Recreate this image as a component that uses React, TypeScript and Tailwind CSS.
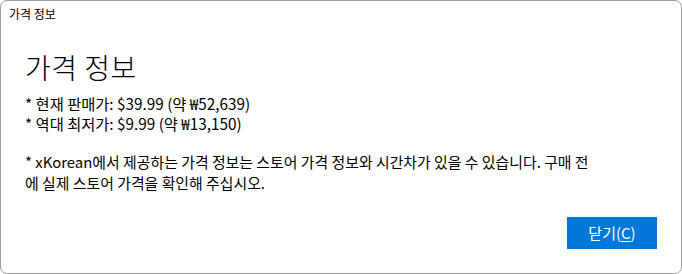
export default function App() {
  const font = { fontFamily: '"Noto Sans CJK KR", "Noto Sans", sans-serif' };
  return (
    <div className="w-[682px] h-[274px] bg-white" style={font}>
      <div className="flex h-full w-full flex-col rounded-[7px] border border-[#9c9c9c] bg-white text-black">
        {/* Title bar */}
        <div className="h-[26px] pl-[8px] pt-[5px] text-[12px] leading-[16px]">가격 정보</div>

        {/* Content */}
        <div className="flex flex-1 flex-col px-[24px] pb-[24px]">
          <h1 className="mt-[22px] text-[28px] font-light leading-[36px] tracking-[0.5px]">가격 정보</h1>
          <div className="mt-[8px] text-[15.3px] leading-[20px]">
            <p>* 현재 판매가: $39.99 (약 ₩52,639)</p>
            <p>* 역대 최저가: $9.99 (약 ₩13,150)</p>
          </div>
          <p className="mt-[18px] text-[14.9px] leading-[21px]">
            * xKorean에서 제공하는 가격 정보는 스토어 가격 정보와 시간차가 있을 수 있습니다. 구매 전
            <br />
            에 실제 스토어 가격을 확인해 주십시오.
          </p>
          <div className="mt-auto flex justify-end">
            <button className="h-[32px] w-[90px] bg-[#0078d7] text-[15px] text-white">
              닫기(<span className="underline underline-offset-2">C</span>)
            </button>
          </div>
        </div>
      </div>
    </div>
  );
}
